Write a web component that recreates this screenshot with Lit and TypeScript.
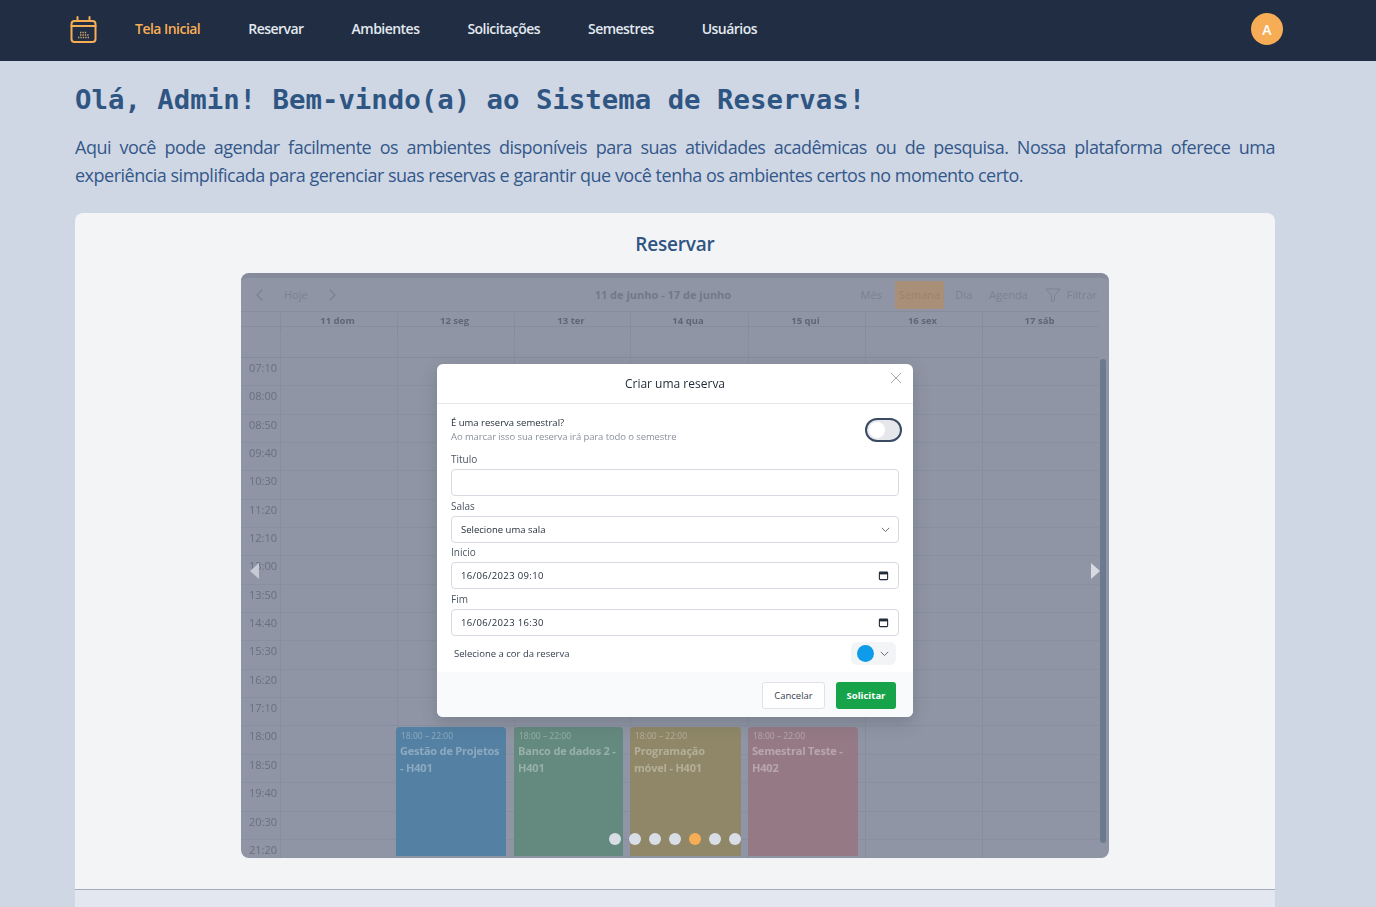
import { LitElement, html, css, svg } from 'lit';
import { customElement } from 'lit/decorators.js';

const NAV = ['Tela Inicial', 'Reservar', 'Ambientes', 'Solicitações', 'Semestres', 'Usuários'];
const DAYS = ['11 dom', '12 seg', '13 ter', '14 qua', '15 qui', '16 sex', '17 sáb'];
const TIMES = ['07:10', '08:00', '08:50', '09:40', '10:30', '11:20', '12:10', '13:00', '13:50', '14:40', '15:30', '16:20', '17:10', '18:00', '18:50', '19:40', '20:30', '21:20'];
const EVENTS = [
  { left: 155, width: 110, bg: '#5380a3', title: 'Gestão de Projetos - H401' },
  { left: 273, width: 109, bg: '#64897e', title: 'Banco de dados 2 - H401' },
  { left: 389, width: 111, bg: '#8f8767', title: 'Programação móvel - H401' },
  { left: 507, width: 110, bg: '#957a85', title: 'Semestral Teste - H402' },
];

const chevron = (d: string, cls = 'chev') => html`<svg class=${cls} viewBox="0 0 16 16" fill="none" stroke="currentColor" stroke-width="1.3" stroke-linecap="round" stroke-linejoin="round"><path d=${d}></path></svg>`;
const calIcon = svg`<rect x="2" y="3" width="12" height="11" rx="1.2" fill="none" stroke="#1f2937" stroke-width="1.6"></rect><rect x="2" y="3" width="12" height="3.4" fill="#1f2937"></rect>`;

@customElement('app-root')
export class AppRoot extends LitElement {
  static styles = css`
    :host {
      display: block;
      height: 907px;
      overflow: hidden;
      background: #cfd7e4;
      font-family: 'Open Sans', 'Noto Sans', sans-serif;
    }
    * { box-sizing: border-box; }

    header {
      height: 61px;
      background: #202d42;
      display: flex;
      align-items: center;
      padding: 0 93px 3px 70px;
    }
    .logo { width: 27px; height: 29px; margin-right: 38px; }
    nav { display: flex; gap: 48px; flex: 1; margin-top: -1px; }
    nav a { font-size: 14px; font-weight: 600; color: #e2e8f0; letter-spacing: -0.53px; }
    nav a.active { color: #f6ad55; }
    .avatar {
      width: 32px; height: 32px; border-radius: 50%;
      background: #f6ad55; color: #fff;
      display: flex; align-items: center; justify-content: center;
      font-size: 14px; font-weight: 600;
    }

    main { padding: 0 101px 0 75px; }
    h1 {
      margin: 0;
      padding-top: 21px;
      height: 70px;
      font: bold 27.35px/36px 'DejaVu Sans Mono', monospace;
      color: #2f5583;
      white-space: nowrap;
    }
    .intro {
      margin: 3px 0 23px;
      font-size: 18px;
      line-height: 28px;
      color: #34578a;
      text-align: justify;
      letter-spacing: -0.5px;
      position: relative;
      top: -1px;
    }
    .card {
      height: 694px;
      background: #f3f4f6;
      border-radius: 8px 8px 0 0;
      display: flex;
      flex-direction: column;
      align-items: center;
    }
    .card h2 {
      margin: 0;
      height: 60px;
      padding-top: 18px;
      font-size: 19px;
      line-height: 27px;
      font-weight: 600;
      letter-spacing: -0.2px;
      color: #2f5583;
    }
    .foot { width: 100%; height: 18px; margin-top: 31px; background: #e2e7f0; border-top: 1px solid #a3acbc; }

    .carousel {
      position: relative;
      width: 868px;
      height: 585px;
      flex: none;
      border-radius: 8px;
      overflow: hidden;
      background: #8f95a4;
      border-top: 5px solid #858b9a;
      color: #6f7684;
      filter: blur(0.3px);
    }
    .toolbar {
      height: 33px;
      display: flex;
      align-items: center;
      font-size: 11px;
      padding-left: 11px;
      padding-right: 12px;
      color: #7b8291;
    }
    .chev { width: 16px; height: 16px; flex: none; }
    .today { margin: 0 16px 0 16px; }
    .range { font-weight: 700; font-size: 11px; margin-left: 255px; color: #727988; width: 270px; }
    .view { margin-right: 11px; }
    .view.active {
      width: 50px; height: 28px; border-radius: 2px; margin: 0 11px 0 2px;
      background: #a98f78; color: #98836e;
      display: flex; align-items: center; justify-content: center;
    }
    .view.day { margin-right: 17px; }
    .view.agenda { margin-right: 0; }
    .filter { width: 16px; height: 16px; margin: 0 6px 0 17px; flex: none; }

    .row { display: grid; grid-template-columns: 39px 117px 117px 116px 118px 117px 117px 117px; margin-right: 10px; }
    .row > div { border-left: 1px solid rgba(70, 78, 94, 0.09); }
    .row > div:first-child { border-left: 0; }
    .days { height: 16px; font-size: 9.5px; font-weight: 700; text-align: center; line-height: 18px; color: #5f6675; border-bottom: 1px solid rgba(70, 78, 94, 0.1); border-top: 1px solid rgba(70, 78, 94, 0.1); }
    .days > div { padding-right: 3px; }
    .allday { height: 31px; border-bottom: 1px solid rgba(70, 78, 94, 0.14); }
    .slot { height: 28.35px; border-bottom: 1px solid rgba(70, 78, 94, 0.08); font-size: 11px; line-height: 19px; color: #686f7d; }
    .slot > div:first-child { padding-left: 8px; white-space: nowrap; }

    .event {
      position: absolute;
      top: 449px;
      height: 129px;
      border-radius: 4px 4px 0 0;
      padding: 3px 4px;
      color: rgba(255, 255, 255, 0.33);
      overflow: hidden;
    }
    .event small { display: block; font-size: 8.5px; line-height: 12px; padding-left: 1px; }
    .event b { display: block; font-size: 11px; line-height: 17px; font-weight: 700; letter-spacing: -0.2px; }
    .scrollbar { position: absolute; left: 859px; top: 81px; width: 6px; height: 484px; border-radius: 3px; background: #6b7a8f; }

    .arrow { position: absolute; top: 285px; width: 0; height: 0; border-top: 8px solid transparent; border-bottom: 8px solid transparent; }
    .arrow.l { left: 9px; border-right: 9px solid #c5cad4; }
    .arrow.r { left: 850px; border-left: 9px solid #d6dae2; }
    .dots { position: absolute; left: 368px; top: 555px; display: flex; gap: 8px; }
    .dots i { width: 12px; height: 12px; border-radius: 50%; background: #d8dde6; }
    .dots i.on { background: #f6ad55; }

    .modal {
      position: absolute;
      left: 196px;
      top: 86px;
      width: 476px;
      height: 353px;
      background: #fff;
      border-radius: 6px;
      box-shadow: 0 6px 16px rgba(60, 66, 80, 0.25);
      color: #374151;
      display: flex;
      flex-direction: column;
    }
    .m-head { height: 40px; flex: none; border-bottom: 1px solid #e7e9ed; text-align: center; font-size: 12px; line-height: 40px; color: #1f2937; }
    .close { position: absolute; right: 10px; top: 7px; width: 14px; height: 14px; color: #a3a8b1; }
    .m-body { flex: 1; padding: 12px 14px 0; }
    .switch-row { display: flex; justify-content: space-between; height: 36px; margin-right: -3px; }
    .switch-row b { display: block; font-weight: 400; font-size: 9.5px; line-height: 14px; color: #1f2937; }
    .switch-row span { display: block; font-size: 9.5px; line-height: 14px; color: #8a909b; letter-spacing: -0.1px; }
    .switch { margin-top: 2px; width: 37px; height: 24px; border: 2px solid #3b4a63; border-radius: 12px; background: #e5e7eb; padding: 2px; }
    .switch i { display: block; width: 16px; height: 16px; border-radius: 50%; background: #fff; }
    label { display: block; font-size: 10px; line-height: 14px; height: 14px; color: #4b5563; }
    .field {
      height: 27px;
      margin: 3px 0 2.67px;
      border: 1px solid #d6d9df;
      border-radius: 4px;
      display: flex;
      align-items: center;
      justify-content: space-between;
      padding: 0 9px;
      font-size: 9.5px;
      color: #1f2937;
    }
    .field.date { letter-spacing: 0.35px; }
    .field .chev, .colorpick .chev { width: 11px; height: 11px; color: #555d6b; }
    .field .chev { margin-right: -2px; }
    .field svg.cal { width: 11px; height: 11px; }
    .color-row { display: flex; align-items: center; justify-content: space-between; height: 26px; padding: 0 3px; margin-top: 5px; font-size: 9.5px; color: #374151; }
    .colorpick { width: 45px; height: 23px; border-radius: 6px; background: #f3f4f6; display: flex; align-items: center; justify-content: space-between; padding: 0 6px; }
    .colorpick i { width: 17px; height: 17px; border-radius: 50%; background: #0e9bea; }
    .m-foot { height: 45px; flex: none; background: #f9fafb; border-radius: 0 0 6px 6px; display: flex; justify-content: flex-end; gap: 11px; padding: 10px 17px 0 0; }
    .btn { height: 27px; border-radius: 3px; font-size: 9.5px; display: flex; align-items: center; justify-content: center; }
    .btn.cancel { width: 63px; background: #fff; border: 1px solid #e0e2e6; color: #374151; }
    .btn.ok { width: 60px; background: #16a34a; color: #fff; font-weight: 700; }
  `;

  render() {
    return html`
      <header>
        <svg class="logo" viewBox="0 0 27 29" fill="none" stroke="#f6ad55" stroke-width="2">
          <rect x="1.5" y="6" width="24" height="21" rx="3"></rect>
          <path d="M1.5 11h24M7.5 2v4M19.5 2v4" stroke-linecap="round"></path>
          <path d="M10 17.5h7M10 20h9M8 22.5h11" stroke="#c9a36e" stroke-width="1.6" stroke-dasharray="1.4 1"></path>
        </svg>
        <nav>${NAV.map((n, i) => html`<a class=${i === 0 ? 'active' : ''}>${n}</a>`)}</nav>
        <div class="avatar">A</div>
      </header>
      <main>
        <h1>Olá, Admin! Bem-vindo(a) ao Sistema de Reservas!</h1>
        <p class="intro">Aqui você pode agendar facilmente os ambientes disponíveis para suas atividades acadêmicas ou de pesquisa. Nossa plataforma oferece uma experiência simplificada para gerenciar suas reservas e garantir que você tenha os ambientes certos no momento certo.</p>
        <section class="card">
          <h2>Reservar</h2>
          <div class="carousel">
            <div class="toolbar">
              ${chevron('M10 3 5 8l5 5')}
              <span class="today">Hoje</span>
              ${chevron('M6 3l5 5-5 5')}
              <span class="range">11 de junho - 17 de junho</span>
              <span class="view">Mês</span>
              <span class="view active">Semana</span>
              <span class="view day">Dia</span>
              <span class="view agenda">Agenda</span>
              <svg class="filter" viewBox="0 0 16 16" fill="none" stroke="currentColor" stroke-width="1"><path d="M1 2h14L9.5 8.5V13l-3 1.5V8.5z" stroke-linejoin="round"></path></svg>
              <span>Filtrar</span>
            </div>
            <div class="row days"><div></div>${DAYS.map((d) => html`<div>${d}</div>`)}</div>
            <div class="row allday"><div></div>${DAYS.map(() => html`<div></div>`)}</div>
            ${TIMES.map((t) => html`<div class="row slot"><div>${t}</div>${DAYS.map(() => html`<div></div>`)}</div>`)}
            ${EVENTS.map((e) => html`
              <div class="event" style="left:${e.left}px;width:${e.width}px;background:${e.bg}">
                <small>18:00 – 22:00</small>
                <b>${e.title}</b>
              </div>`)}
            <div class="scrollbar"></div>
            <div class="modal">
              <div class="m-head">Criar uma reserva</div>
              ${chevronClose()}
              <div class="m-body">
                <div class="switch-row">
                  <div><b>É uma reserva semestral?</b><span>Ao marcar isso sua reserva irá para todo o semestre</span></div>
                  <div class="switch"><i></i></div>
                </div>
                <label>Titulo</label>
                <div class="field"></div>
                <label>Salas</label>
                <div class="field">Selecione uma sala ${chevron('M3 6l5 5 5-5')}</div>
                <label>Inicio</label>
                <div class="field date">16/06/2023 09:10 <svg class="cal" viewBox="0 0 16 16">${calIcon}</svg></div>
                <label>Fim</label>
                <div class="field date">16/06/2023 16:30 <svg class="cal" viewBox="0 0 16 16">${calIcon}</svg></div>
                <div class="color-row">Selecione a cor da reserva <div class="colorpick"><i></i>${chevron('M3 6l5 5 5-5')}</div></div>
              </div>
              <div class="m-foot">
                <div class="btn cancel">Cancelar</div>
                <div class="btn ok">Solicitar</div>
              </div>
            </div>
            <div class="arrow l"></div>
            <div class="arrow r"></div>
            <div class="dots">${[0, 1, 2, 3, 4, 5, 6].map((i) => html`<i class=${i === 4 ? 'on' : ''}></i>`)}</div>
          </div>
          <div class="foot"></div>
        </section>
      </main>
    `;
  }
}

function chevronClose() {
  return html`<svg class="close" viewBox="0 0 14 14" fill="none" stroke="currentColor" stroke-width="1"><path d="M2 2l10 10M12 2 2 12"></path></svg>`;
}
